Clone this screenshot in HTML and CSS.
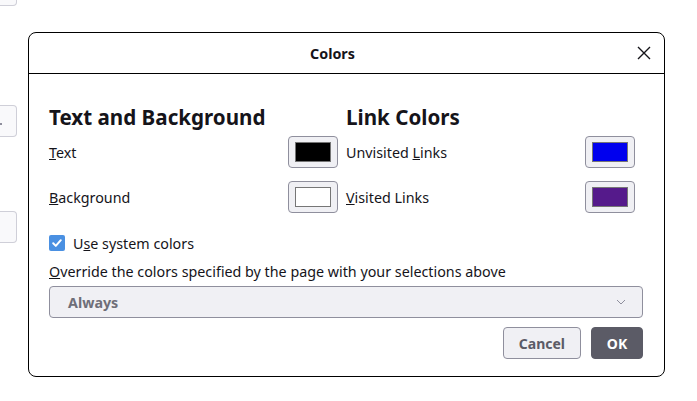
FILE: index.html
```html
<!DOCTYPE html>
<html lang="en">
<head>
    <meta charset="UTF-8">
    <title>Colors</title>
    <link rel="stylesheet" href="styles.css">
</head>
<body>
    <div class="page">
        <div class="ghost ghost-top"></div>
        <div class="ghost ghost-mid"><span class="dot"></span></div>
        <div class="ghost ghost-low"></div>
    </div>

    <div class="dialog" role="dialog" aria-labelledby="dialogTitle">
        <div class="dialog-header">
            <span id="dialogTitle" class="dialog-title">Colors</span>
            <button class="close" aria-label="Close">
                <svg width="14" height="14" viewBox="0 0 14 14">
                    <path d="M1 1 L13 13 M13 1 L1 13" stroke="#15141a" stroke-width="1.4" fill="none"/>
                </svg>
            </button>
        </div>
        <div class="dialog-body">
            <div class="columns">
                <div class="group">
                    <h2>Text and Background</h2>
                    <div class="row">
                        <label><u>T</u>ext</label>
                        <button class="swatch"><span style="background: #000000;"></span></button>
                    </div>
                    <div class="row">
                        <label><u>B</u>ackground</label>
                        <button class="swatch"><span style="background: #ffffff;"></span></button>
                    </div>
                </div>
                <div class="group">
                    <h2>Link Colors</h2>
                    <div class="row">
                        <label>Unvisited <u>L</u>inks</label>
                        <button class="swatch"><span style="background: #0000ee;"></span></button>
                    </div>
                    <div class="row">
                        <label><u>V</u>isited Links</label>
                        <button class="swatch"><span style="background: #551a8b;"></span></button>
                    </div>
                </div>
            </div>
            <label class="check">
                <span class="box">
                    <svg width="12" height="12" viewBox="0 0 12 12">
                        <path d="M2.2 6.3 L4.8 8.9 L9.8 3.2" stroke="#fff" stroke-width="2" fill="none" stroke-linecap="round" stroke-linejoin="round"/>
                    </svg>
                </span>
                <span>U<u>s</u>e system colors</span>
            </label>
            <div class="override"><u>O</u>verride the colors specified by the page with your selections above</div>
            <div class="select">
                <span>Always</span>
                <svg width="10" height="6" viewBox="0 0 10 6">
                    <path d="M1 1 L5 5 L9 1" stroke="#8f8f9d" stroke-width="1" fill="none"/>
                </svg>
            </div>
            <div class="actions">
                <button class="btn">Cancel</button>
                <button class="btn primary">OK</button>
            </div>
        </div>
    </div>
</body>
</html>
```

FILE: styles.css
```css
body {
    margin: 0;
    background: #ffffff;
    color: #15141a;
    font-family: 'Noto Sans', 'DejaVu Sans', sans-serif;
    font-size: 14.3px;
}
.page {
    width: 697px;
    height: 401px;
    overflow: hidden;
}
.ghost {
    width: 16px;
    height: 30px;
    border: 1px solid #cfcfd8;
    border-left: none;
    border-radius: 0 4px 4px 0;
    background: #f9f9fb;
    position: relative;
}
.ghost-top {
    margin-top: -26px;
}
.ghost-mid {
    margin-top: 99px;
}
.ghost-low {
    margin-top: 74px;
}
.dot {
    position: absolute;
    left: 0;
    top: 17px;
    width: 2px;
    height: 2px;
    background: #8f8f9d;
}
.dialog {
    position: absolute;
    left: 28px;
    top: 32px;
    width: 635px;
    height: 343px;
    border: 1px solid #000;
    border-radius: 8px;
    background: #fff;
    display: flex;
    flex-direction: column;
}
.dialog-header {
    height: 40px;
    border-bottom: 1px solid #000;
    display: flex;
    align-items: center;
    justify-content: center;
    position: relative;
}
.dialog-title {
    font-weight: bold;
    font-size: 14.3px;
    margin-right: 28px;
}
.close {
    position: absolute;
    right: 13px;
    top: 13px;
    padding: 0;
    border: none;
    background: none;
    width: 14px;
    height: 14px;
}
.dialog-body {
    padding: 27px 21px 0 20px;
}
.columns {
    display: grid;
    grid-template-columns: 297px 297px;
}
h2 {
    margin: 0 0 3px 0;
    font-size: 20.6px;
    font-weight: bold;
    line-height: 32px;
}
.row {
    display: flex;
    align-items: center;
    justify-content: space-between;
    height: 32px;
    margin-bottom: 13px;
}
.swatch {
    width: 50px;
    height: 32px;
    margin-right: 8px;
    padding: 0;
    border: 1px solid #8f8f9d;
    border-radius: 4px;
    background: #f0f0f4;
    display: flex;
    align-items: center;
    justify-content: center;
}
.swatch span {
    width: 34px;
    height: 18px;
    border: 1px solid #767676;
}
.check {
    display: flex;
    align-items: center;
    gap: 8px;
    height: 20px;
    margin-top: 7px;
}
.box {
    width: 16px;
    height: 16px;
    border-radius: 2px;
    background: #4a90e2;
    display: flex;
    align-items: center;
    justify-content: center;
}
.override {
    margin-top: 9px;
    line-height: 20px;
}
.select {
    margin-top: 4px;
    height: 30px;
    border: 1px solid #8f8f9d;
    border-radius: 4px;
    background: #f0f0f4;
    display: flex;
    align-items: center;
    justify-content: space-between;
    padding: 0 16px 0 18px;
    color: #6e6e78;
    font-weight: bold;
}
.actions {
    display: flex;
    justify-content: flex-end;
    gap: 10px;
    margin-top: 9px;
}
.btn {
    height: 32px;
    padding: 0 15px;
    border: 1px solid #8f8f9d;
    border-radius: 4px;
    background: #f0f0f4;
    color: #5b5b66;
    font-family: inherit;
    font-size: 14px;
    font-weight: bold;
}
.btn.primary {
    width: 52px;
    padding: 0;
    border-color: #5b5b66;
    background: #5b5b66;
    color: #ffffff;
}
```
